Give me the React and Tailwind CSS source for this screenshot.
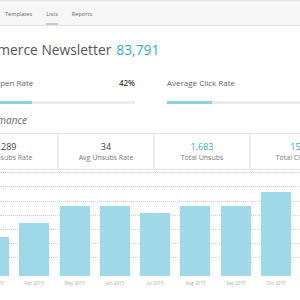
const TABS = ["Templates", "Lists", "Reports"];

const STATS = [
  { value: "1,289", label: "Avg Unsubs Rate", blue: false, w: "w-[104px]" },
  { value: "34", label: "Avg Unsubs Rate", blue: false, w: "w-[96px]" },
  { value: "1,683", label: "Total Unsubs", blue: true, w: "w-[96px]" },
  { value: "157", label: "Total Cleaned", blue: true, w: "w-[96px]" },
];

const BARS = [
  { label: "Mar 2015", top: 238 },
  { label: "Apr 2015", top: 224 },
  { label: "May 2015", top: 207 },
  { label: "Jun 2015", top: 207 },
  { label: "Jul 2015", top: 214 },
  { label: "Aug 2015", top: 207 },
  { label: "Sep 2015", top: 207 },
  { label: "Oct 2015", top: 193 },
];

const GRID = [173, 187, 202, 216, 230, 244, 258];

export default function App() {
  return (
    <div
      className="relative h-[300px] w-[300px] overflow-hidden bg-white"
      style={{ fontFamily: "'Open Sans', 'Liberation Sans', sans-serif" }}
    >
      {/* nav */}
      <div className="flex h-[26px] items-end gap-[14px] border-t border-b border-[#e2e2e2] bg-[#f6f6f6] pl-[5px]">
        {TABS.map((tab) => (
          <div key={tab} className="flex flex-col items-center">
            <span className="text-[5.6px] leading-[8px] text-[#666]">{tab}</span>
            <span
              className={`mt-[5px] h-[2px] w-full rounded ${
                tab === "Lists" ? "bg-[#c8c8c8]" : "bg-transparent"
              }`}
            />
          </div>
        ))}
      </div>

      {/* title */}
      <div className="ml-[-38px] mt-[13px] flex items-baseline gap-[5px] whitespace-nowrap">
        <span className="text-[13.8px] font-medium leading-[22px] text-[#555]">Ecommerce Newsletter</span>
        <span className="text-[13.8px] font-medium leading-[22px] text-[#3aa8d0]">83,791</span>
      </div>

      {/* rates */}
      <div className="mt-[17px] flex gap-[32px]">
        <div className="ml-[-6px] w-[141px] shrink-0">
          <div className="flex items-center justify-between text-[8px] leading-[10px]">
            <span className="text-[#666]">Open Rate</span>
            <span className="font-semibold text-[#444]">42%</span>
          </div>
          <div className="mt-[13px] h-[3px] w-full bg-[#ececec]">
            <div className="h-full w-[38px] bg-[#8fd1e4]" />
          </div>
        </div>
        <div className="w-[160px] shrink-0">
          <div className="text-[8px] leading-[10px] text-[#666]">Average Click Rate</div>
          <div className="mt-[13px] h-[3px] w-full bg-[#ececec]">
            <div className="h-full w-[45px] bg-[#8fd1e4]" />
          </div>
        </div>
      </div>

      {/* performance */}
      <div className="ml-[-30px] mt-[9px] text-[10px] italic leading-[14px] text-[#666]">Performance</div>

      <div className="ml-[-47px] mt-[6px] flex h-[37px] w-[400px] border-y border-[#e6e6e6]">
        {STATS.map((s, i) => (
          <div
            key={i}
            className={`flex ${s.w} shrink-0 flex-col items-center justify-center ${
              i > 0 ? "border-l-[2px] border-[#ececec]" : ""
            }`}
          >
            <span className={`text-[9px] leading-[12px] ${s.blue ? "text-[#3aa8d0]" : "text-[#444]"}`}>
              {s.value}
            </span>
            <span className="text-[7px] leading-[10px] text-[#777]">{s.label}</span>
          </div>
        ))}
      </div>

      {/* chart */}
      <div className="relative mt-[9px] h-[120px]">
        {GRID.map((y) => (
          <div
            key={y}
            className="absolute left-0 right-0 border-t border-dotted border-[#cfcfcf]"
            style={{ top: y - 180 }}
          />
        ))}
        <div className="absolute left-[-21px] top-0 flex h-[97px] items-end gap-[10.3px]">
          {BARS.map((b) => (
            <div key={b.label} className="relative flex w-[30px] flex-col items-center">
              <div className="w-full bg-[#9fd8e7]" style={{ height: 277 - b.top }} />
            </div>
          ))}
        </div>
        <div className="absolute left-[-21px] top-[101px] flex gap-[10.3px]">
          {BARS.map((b) => (
            <div key={b.label} className="w-[30px] text-center text-[4.5px] leading-[6px] text-[#aaa]">
              {b.label}
            </div>
          ))}
        </div>
      </div>
    </div>
  );
}
